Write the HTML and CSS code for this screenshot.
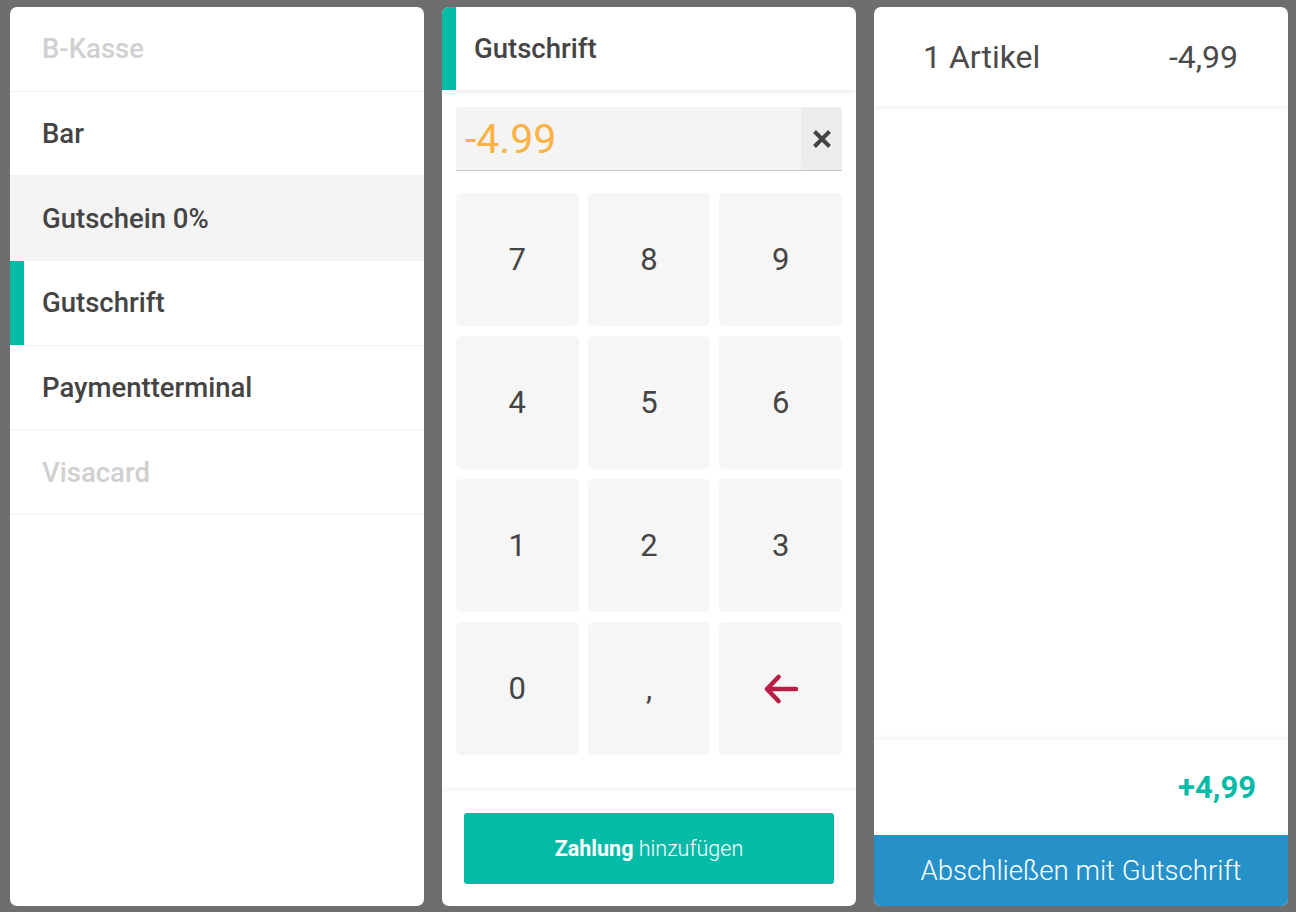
FILE: index.html
```html
<!DOCTYPE html>
<html lang="de">
<head>
<meta charset="utf-8">
<title>Kasse</title>
<link rel="stylesheet" href="styles.css">
</head>
<body>
<div class="app">
  <section class="panel methods">
    <div class="method disabled">B-Kasse</div>
    <div class="method">Bar</div>
    <div class="method hover">Gutschein 0%</div>
    <div class="method active">Gutschrift</div>
    <div class="method">Paymentterminal</div>
    <div class="method disabled">Visacard</div>
  </section>

  <section class="panel pad">
    <header class="pad-head">Gutschrift</header>
    <div class="pad-body">
      <div class="amount">
        <div class="amount-value">-4.99</div>
        <button class="amount-clear" aria-label="Löschen">
          <svg width="20" height="20" viewBox="0 0 20 20"><path d="M2.5 2.5 L17.5 17.5 M17.5 2.5 L2.5 17.5" stroke="#444" stroke-width="4" fill="none"/></svg>
        </button>
      </div>
      <div class="keys">
        <button class="key">7</button>
        <button class="key">8</button>
        <button class="key">9</button>
        <button class="key">4</button>
        <button class="key">5</button>
        <button class="key">6</button>
        <button class="key">1</button>
        <button class="key">2</button>
        <button class="key">3</button>
        <button class="key">0</button>
        <button class="key">,</button>
        <button class="key back" aria-label="Zurück">
          <svg width="40" height="32" viewBox="0 0 40 32"><path d="M35 16 H6 M17.5 4 L6 16 L17.5 28" stroke="#b81e46" stroke-width="4.6" stroke-linecap="round" stroke-linejoin="round" fill="none"/></svg>
        </button>
      </div>
    </div>
    <footer class="pad-foot">
      <button class="add-btn"><b>Zahlung</b> hinzufügen</button>
    </footer>
  </section>

  <section class="panel summary">
    <header class="sum-head">
      <span>1 Artikel</span>
      <span>-4,99</span>
    </header>
    <div class="sum-body"></div>
    <footer class="sum-foot">
      <div class="sum-total">+4,99</div>
      <button class="finish-btn">Abschließen mit Gutschrift</button>
    </footer>
  </section>
</div>
</body>
</html>
```
FILE: styles.css
```css
* { box-sizing: border-box; }
html, body { margin: 0; height: 100%; }
body {
  background: #6e6e6e;
  font-family: Roboto, "Noto Sans", Arial, sans-serif;
  color: #444;
}
button { font-family: inherit; border: 0; cursor: pointer; }
.app {
  display: flex;
  gap: 18px;
  padding: 7px 8px 6px 10px;
  height: 912px;
}
.panel {
  width: 414px;
  background: #fff;
  border-radius: 7px;
  overflow: hidden;
  display: flex;
  flex-direction: column;
}

/* left list */
.method {
  height: 84.7px;
  flex: none;
  display: flex;
  align-items: center;
  padding-left: 32px;
  font-size: 27.5px;
  font-weight: 500;
  color: #444;
  border-bottom: 1px solid #f1f1f1;
}
.method.disabled { color: #d0d0d0; }
.method.hover { background: #f4f4f4; }
.method.active { box-shadow: inset 14px 0 0 #05bba8; }

/* middle */
.pad-head {
  height: 83px;
  flex: none;
  display: flex;
  align-items: center;
  padding-left: 18px;
  border-left: 14px solid #05bba8;
  font-size: 27.5px;
  font-weight: 500;
  color: #444;
  box-shadow: 0 2px 6px rgba(0,0,0,0.08);
  position: relative;
  z-index: 1;
}
.pad-body {
  flex: 1;
  padding: 17px 14px 0 14px;
}
.amount {
  display: flex;
  height: 64px;
  background: #f4f4f4;
  border-bottom: 1px solid #c8c8c8;
  border-radius: 4px 4px 0 0;
}
.amount-value {
  flex: 1;
  display: flex;
  align-items: center;
  padding-left: 9px;
  font-size: 41px;
  color: #fbb244;
  font-weight: 400;
}
.amount-clear {
  width: 41px;
  height: 63px;
  background: #ececec;
  border-radius: 4px;
  display: flex;
  align-items: center;
  justify-content: center;
  padding: 0;
}
.keys {
  margin-top: 22px;
  display: grid;
  grid-template-columns: repeat(3, 1fr);
  grid-auto-rows: 133px;
  column-gap: 9px;
  row-gap: 10px;
}
.key {
  background: #f6f6f6;
  border-radius: 5px;
  font-size: 31px;
  color: #444;
  font-weight: 400;
  display: flex;
  align-items: center;
  justify-content: center;
  padding: 0;
}
.pad-foot {
  flex: none;
  height: 115px;
  padding: 22px 22px;
  box-shadow: 0 -2px 6px rgba(0,0,0,0.05);
  position: relative;
}
.add-btn {
  width: 100%;
  height: 71px;
  background: #05bba8;
  color: #fff;
  border-radius: 3px;
  font-size: 21.5px;
  font-weight: 300;
}
.add-btn b { font-weight: 700; }

/* right */
.sum-head {
  height: 99px;
  flex: none;
  display: flex;
  align-items: center;
  justify-content: space-between;
  padding: 0 50px 0 49px;
  font-size: 32px;
  font-weight: 400;
  color: #4a4a4a;
  box-shadow: 0 2px 6px rgba(0,0,0,0.07);
  position: relative;
  z-index: 1;
}
.sum-body { flex: 1; }
.sum-foot {
  flex: none;
  box-shadow: 0 -2px 6px rgba(0,0,0,0.05);
  position: relative;
}
.sum-total {
  height: 95px;
  display: flex;
  align-items: center;
  justify-content: flex-end;
  padding: 0 32px 0 0;
  font-size: 31px;
  font-weight: 700;
  color: #05bba8;
}
.finish-btn {
  width: 100%;
  height: 71px;
  background: #2690c8;
  color: #fff;
  font-size: 27.6px;
  font-weight: 300;
  display: block;
}
```
